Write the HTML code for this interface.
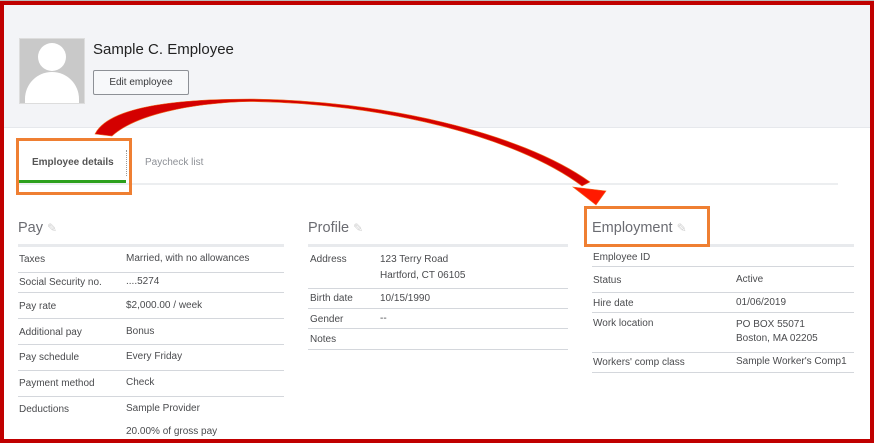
<!DOCTYPE html>
<html><head><style>
*{margin:0;padding:0;box-sizing:border-box}
body{width:874px;height:443px;position:relative;overflow:hidden;background:#fff;font-family:"Liberation Sans",sans-serif;color:#393a3d}
.a{position:absolute;white-space:nowrap}
.hdr{position:absolute;left:4px;top:5px;width:866px;height:123px;background:#f3f4f7;border-bottom:1px solid #e6e8ec}
.s{font-size:10px;color:#4a4b4e}
.t{font-size:14.5px;color:#6b6c72}
.ln{position:absolute;height:1px;background:#d4d7dc}
.hl{position:absolute;height:3px;background:#e8eaed}
</style></head><body>
<div class="hdr"></div>
<div class="a" style="left:0;top:0;width:874px;height:1px;background:#bbb"></div>
<div class="a" style="left:19px;top:38px;width:66px;height:66px;background:#c9c9c9;border:1px solid #ddd;overflow:hidden">
<div class="a" style="left:18px;top:4px;width:28px;height:28px;border-radius:50%;background:#fff"></div>
<div class="a" style="left:5px;top:33px;width:54px;height:48px;border-radius:27px 27px 0 0;background:#fff"></div>
</div>
<div class="a" style="left:93px;top:41px;font-size:15px;color:#222">Sample C. Employee</div>
<div class="a" style="left:93px;top:70px;width:96px;height:25px;border:1px solid #8d9096;border-radius:2px;background:#f7f8fa;font-size:10px;color:#393a3d;text-align:center;line-height:23px">Edit employee</div>
<div class="a s" style="left:32px;top:157px;color:#555;font-weight:bold;font-size:10px">Employee details</div>
<div class="a" style="left:126px;top:150px;height:26px;border-left:1px dotted #999"></div>
<div class="a s" style="left:145px;top:157px;color:#8d9096">Paycheck list</div>
<div class="a" style="left:18px;top:183px;width:820px;height:2px;background:#eceef0"></div>
<div class="a" style="left:19px;top:180px;width:107px;height:3px;background:#2ca01c"></div>
<div class="a" style="left:16px;top:138px;width:116px;height:57px;border:3px solid #ef7f32"></div>
<div class="a t" style="left:18px;top:220px">Pay <span style="color:#d0d0d0;font-size:12px">✎</span></div>
<div class="hl" style="left:18px;top:244px;width:266px"></div>
<div class="a s" style="left:19px;top:254px">Taxes</div><div class="a s" style="left:126px;top:253px">Married, with no allowances</div>
<div class="ln" style="left:18px;top:272px;width:266px"></div>
<div class="a s" style="left:19px;top:277px">Social Security no.</div><div class="a s" style="left:126px;top:276px">....5274</div>
<div class="ln" style="left:18px;top:292px;width:266px"></div>
<div class="a s" style="left:19px;top:301px">Pay rate</div><div class="a s" style="left:126px;top:300px">$2,000.00 / week</div>
<div class="ln" style="left:18px;top:318px;width:266px"></div>
<div class="a s" style="left:19px;top:327px">Additional pay</div><div class="a s" style="left:126px;top:326px">Bonus</div>
<div class="ln" style="left:18px;top:344px;width:266px"></div>
<div class="a s" style="left:19px;top:352px">Pay schedule</div><div class="a s" style="left:126px;top:351px">Every Friday</div>
<div class="ln" style="left:18px;top:370px;width:266px"></div>
<div class="a s" style="left:19px;top:378px">Payment method</div><div class="a s" style="left:126px;top:377px">Check</div>
<div class="ln" style="left:18px;top:396px;width:266px"></div>
<div class="a s" style="left:19px;top:404px">Deductions</div><div class="a s" style="left:126px;top:403px">Sample Provider</div>
<div class="a s" style="left:126px;top:426px">20.00% of gross pay</div>
<div class="a t" style="left:308px;top:220px">Profile <span style="color:#d0d0d0;font-size:12px">✎</span></div>
<div class="hl" style="left:308px;top:244px;width:260px"></div>
<div class="a s" style="left:310px;top:254px">Address</div><div class="a s" style="left:380px;top:254px">123 Terry Road</div>
<div class="a s" style="left:380px;top:270px">Hartford, CT 06105</div>
<div class="ln" style="left:308px;top:288px;width:260px"></div>
<div class="a s" style="left:310px;top:293px">Birth date</div><div class="a s" style="left:380px;top:293px">10/15/1990</div>
<div class="ln" style="left:308px;top:308px;width:260px"></div>
<div class="a s" style="left:310px;top:314px">Gender</div><div class="a s" style="left:380px;top:313px">--</div>
<div class="ln" style="left:308px;top:328px;width:260px"></div>
<div class="a s" style="left:310px;top:334px">Notes</div>
<div class="ln" style="left:308px;top:349px;width:260px"></div>
<div class="a t" style="left:592px;top:220px">Employment <span style="color:#d0d0d0;font-size:12px">✎</span></div>
<div class="hl" style="left:584px;top:244px;width:270px"></div>
<div class="a" style="left:584px;top:206px;width:126px;height:41px;border:3px solid #ef7f32"></div>
<div class="a s" style="left:593px;top:252px">Employee ID</div>
<div class="ln" style="left:592px;top:266px;width:262px"></div>
<div class="a s" style="left:593px;top:275px">Status</div><div class="a s" style="left:736px;top:274px">Active</div>
<div class="ln" style="left:592px;top:292px;width:262px"></div>
<div class="a s" style="left:593px;top:298px">Hire date</div><div class="a s" style="left:736px;top:297px">01/06/2019</div>
<div class="ln" style="left:592px;top:312px;width:262px"></div>
<div class="a s" style="left:593px;top:318px">Work location</div><div class="a s" style="left:736px;top:319px">PO BOX 55071</div>
<div class="a s" style="left:736px;top:333px">Boston, MA 02205</div>
<div class="ln" style="left:592px;top:352px;width:262px"></div>
<div class="a s" style="left:593px;top:357px">Workers' comp class</div><div class="a s" style="left:736px;top:356px">Sample Worker's Comp1</div>
<div class="ln" style="left:592px;top:372px;width:262px"></div>
<svg class="a" style="left:0;top:0" width="874" height="443">
<path d="M95,134 C108,108 170,99 250,99 C380,100 520,132 590,182 L582,186 C515,136 380,103 250,101.5 C190,103 135,115 112,136 Z" fill="#d40000" stroke="#ef6a20" stroke-width="0.6"/>
<path d="M573,187 L606,191 L596,205 Z" fill="#ff1a00" stroke="#ef6a20" stroke-width="0.6"/>
</svg>
<div class="a" style="left:0;top:1px;width:874px;height:442px;border:4px solid #c00000"></div>
</body></html>
